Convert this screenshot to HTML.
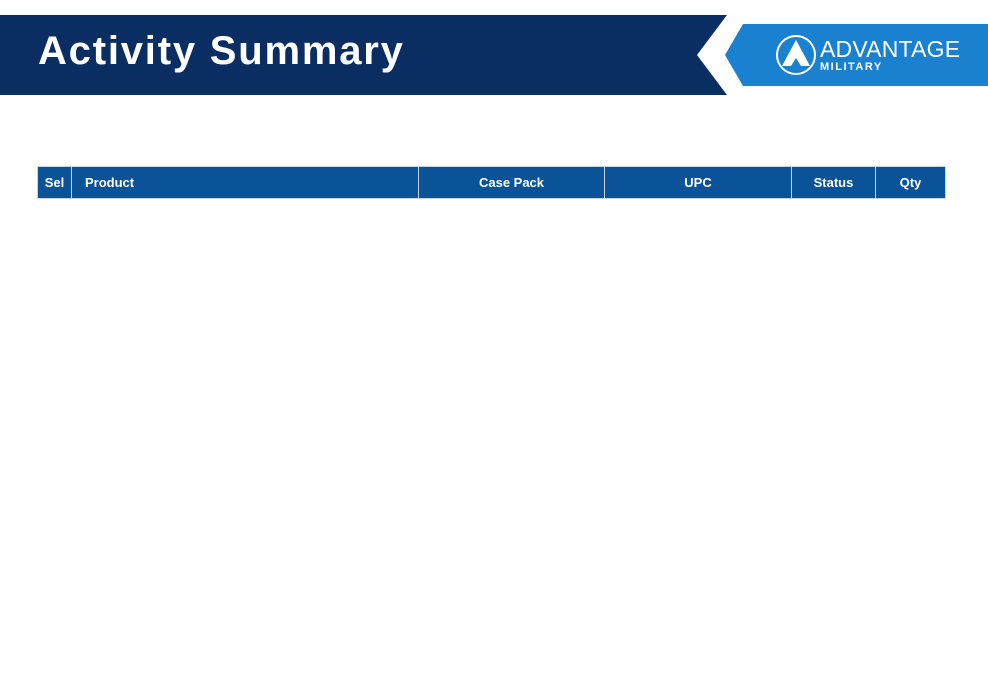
<!DOCTYPE html>
<html><head><style>
body{margin:0;width:988px;height:679px;background:#fff;position:relative;overflow:hidden;font-family:"Liberation Sans",sans-serif}
svg.bg{position:absolute;left:0;top:0}
h1{position:absolute;left:38px;top:29px;margin:0;font-size:40px;font-weight:bold;color:#fff;letter-spacing:1.8px}
.logo{position:absolute;left:820px;top:37px;color:#fff}
.t1{position:absolute;left:0;top:0;font-size:23px;letter-spacing:0.2px;line-height:24px;white-space:nowrap}
.t2{position:absolute;left:0;top:24px;font-size:11px;font-weight:bold;letter-spacing:1.5px}
table{position:absolute;left:37px;top:166px;border-collapse:collapse}
td{background:#0b5399;color:#fff;font-weight:bold;font-size:13px;height:32px;padding:0;border:1px solid #c9d5e6;box-sizing:border-box;text-align:center}
</style></head><body>
<svg class="bg" width="988" height="100">
<polygon points="0,15 727,15 697,55 727,95 0,95" fill="#0a2d62"/>
<polygon points="743,24 988,24 988,86 743,86 725,55" fill="#1a80d0"/>
<circle cx="796" cy="55" r="19" fill="none" stroke="#fff" stroke-width="2"/>
<polygon points="796,40 810,66 782,66" fill="#fff"/>
<polygon points="796,58 801,66 791,66" fill="#1a80d0"/>
</svg>
<h1>Activity Summary</h1>
<div class="logo"><div class="t1">ADVANTAGE</div><div class="t2">MILITARY</div></div>
<table><tr>
<td style="width:34px">Sel</td>
<td style="width:347px;text-align:left;padding-left:13px">Product</td>
<td style="width:186px">Case Pack</td>
<td style="width:187px">UPC</td>
<td style="width:84px">Status</td>
<td style="width:70px">Qty</td>
</tr></table>
</body></html>
